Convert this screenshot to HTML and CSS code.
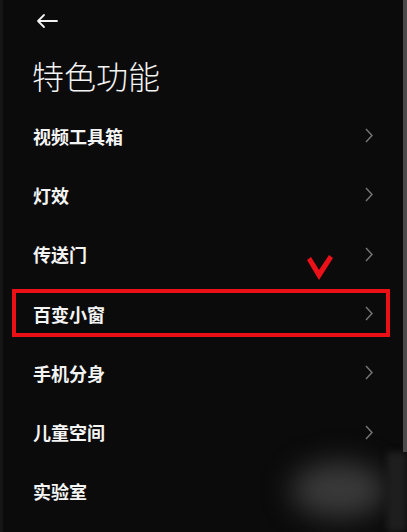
FILE: index.html
```html
<!DOCTYPE html>
<html lang="zh-CN">
<head>
    <meta charset="UTF-8">
    <meta name="viewport" content="width=device-width, initial-scale=1.0">
    <title>特色功能</title>
    <link rel="stylesheet" href="styles.css">
</head>
<body>
    <div class="screen">
        <div class="topbar">
            <svg class="back" width="24" height="16" viewBox="0 0 24 16">
                <path d="M22 8H3M9 2L3 8l6 6" fill="none" stroke="#f2f2f2" stroke-width="1.8" stroke-linecap="round" stroke-linejoin="round"/>
            </svg>
        </div>
        <h1 class="title">特色功能</h1>
        <ul class="menu">
            <li class="item"><span>视频工具箱</span><svg class="chev" width="8" height="15" viewBox="0 0 8 15"><path d="M1 1l6 6.5L1 14" fill="none" stroke="#777" stroke-width="1.4"/></svg></li>
            <li class="item"><span>灯效</span><svg class="chev" width="8" height="15" viewBox="0 0 8 15"><path d="M1 1l6 6.5L1 14" fill="none" stroke="#777" stroke-width="1.4"/></svg></li>
            <li class="item"><span>传送门</span><svg class="chev" width="8" height="15" viewBox="0 0 8 15"><path d="M1 1l6 6.5L1 14" fill="none" stroke="#777" stroke-width="1.4"/></svg></li>
            <li class="item marked">
                <span>百变小窗</span><svg class="chev" width="8" height="15" viewBox="0 0 8 15"><path d="M1 1l6 6.5L1 14" fill="none" stroke="#777" stroke-width="1.4"/></svg>
                <svg class="pointer" width="30" height="29" viewBox="0 0 30 29">
                    <polygon points="3,7 7,4 15,17 25,2 29,5 15,27" fill="#ec1118"/>
                </svg>
            </li>
            <li class="item"><span>手机分身</span><svg class="chev" width="8" height="15" viewBox="0 0 8 15"><path d="M1 1l6 6.5L1 14" fill="none" stroke="#777" stroke-width="1.4"/></svg></li>
            <li class="item"><span>儿童空间</span><svg class="chev" width="8" height="15" viewBox="0 0 8 15"><path d="M1 1l6 6.5L1 14" fill="none" stroke="#777" stroke-width="1.4"/></svg></li>
            <li class="item"><span>实验室</span></li>
        </ul>
        <div class="smudge"></div>
        <div class="smudge-edge"></div>
    </div>
</body>
</html>
```

FILE: styles.css
```css
html, body {
    margin: 0;
    padding: 0;
    background-color: #0b0b0b;
}

body {
    font-family: "Noto Sans CJK SC", "Noto Sans", sans-serif;
    color: #f4f4f4;
}

.screen {
    position: relative;
    width: 407px;
    height: 532px;
    overflow: hidden;
    box-sizing: border-box;
    border-left: 3px solid #161616;
    background-color: #0b0b0b;
}

/* grey strip down the right edge of the capture */
.screen::after {
    content: "";
    position: absolute;
    top: 0;
    right: 0;
    width: 4px;
    height: 452px;
    background-color: #4a4a4a;
}

.topbar {
    height: 42px;
    padding: 13px 0 0 32px;
    box-sizing: border-box;
}

.back {
    display: block;
}

.title {
    margin: 13px 0 0 29px;
    font-size: 32px;
    line-height: 40px;
    font-weight: 300;
}

.menu {
    list-style: none;
    margin: 11px 0 0 0;
    padding: 0;
}

.item {
    position: relative;
    height: 59.3px;
    display: flex;
    align-items: center;
    justify-content: space-between;
    padding: 0 34px 0 30px;
    font-size: 18px;
    font-weight: 700;
}

.chev {
    display: block;
}

.marked::before {
    content: "";
    position: absolute;
    left: 9px;
    right: 17px;
    top: 5px;
    bottom: 6px;
    border: 4px solid #ea1016;
}

.pointer {
    position: absolute;
    left: 301px;
    top: -31px;
}

/* blurred watermark in the bottom right corner */
.smudge {
    position: absolute;
    left: 288px;
    top: 462px;
    width: 96px;
    height: 56px;
    border-radius: 50%;
    background-color: #3a3a3a;
    filter: blur(14px);
}

.smudge-edge {
    position: absolute;
    right: 0;
    top: 452px;
    width: 20px;
    height: 80px;
    background-color: #1e1e1e;
    filter: blur(3px);
}
```
